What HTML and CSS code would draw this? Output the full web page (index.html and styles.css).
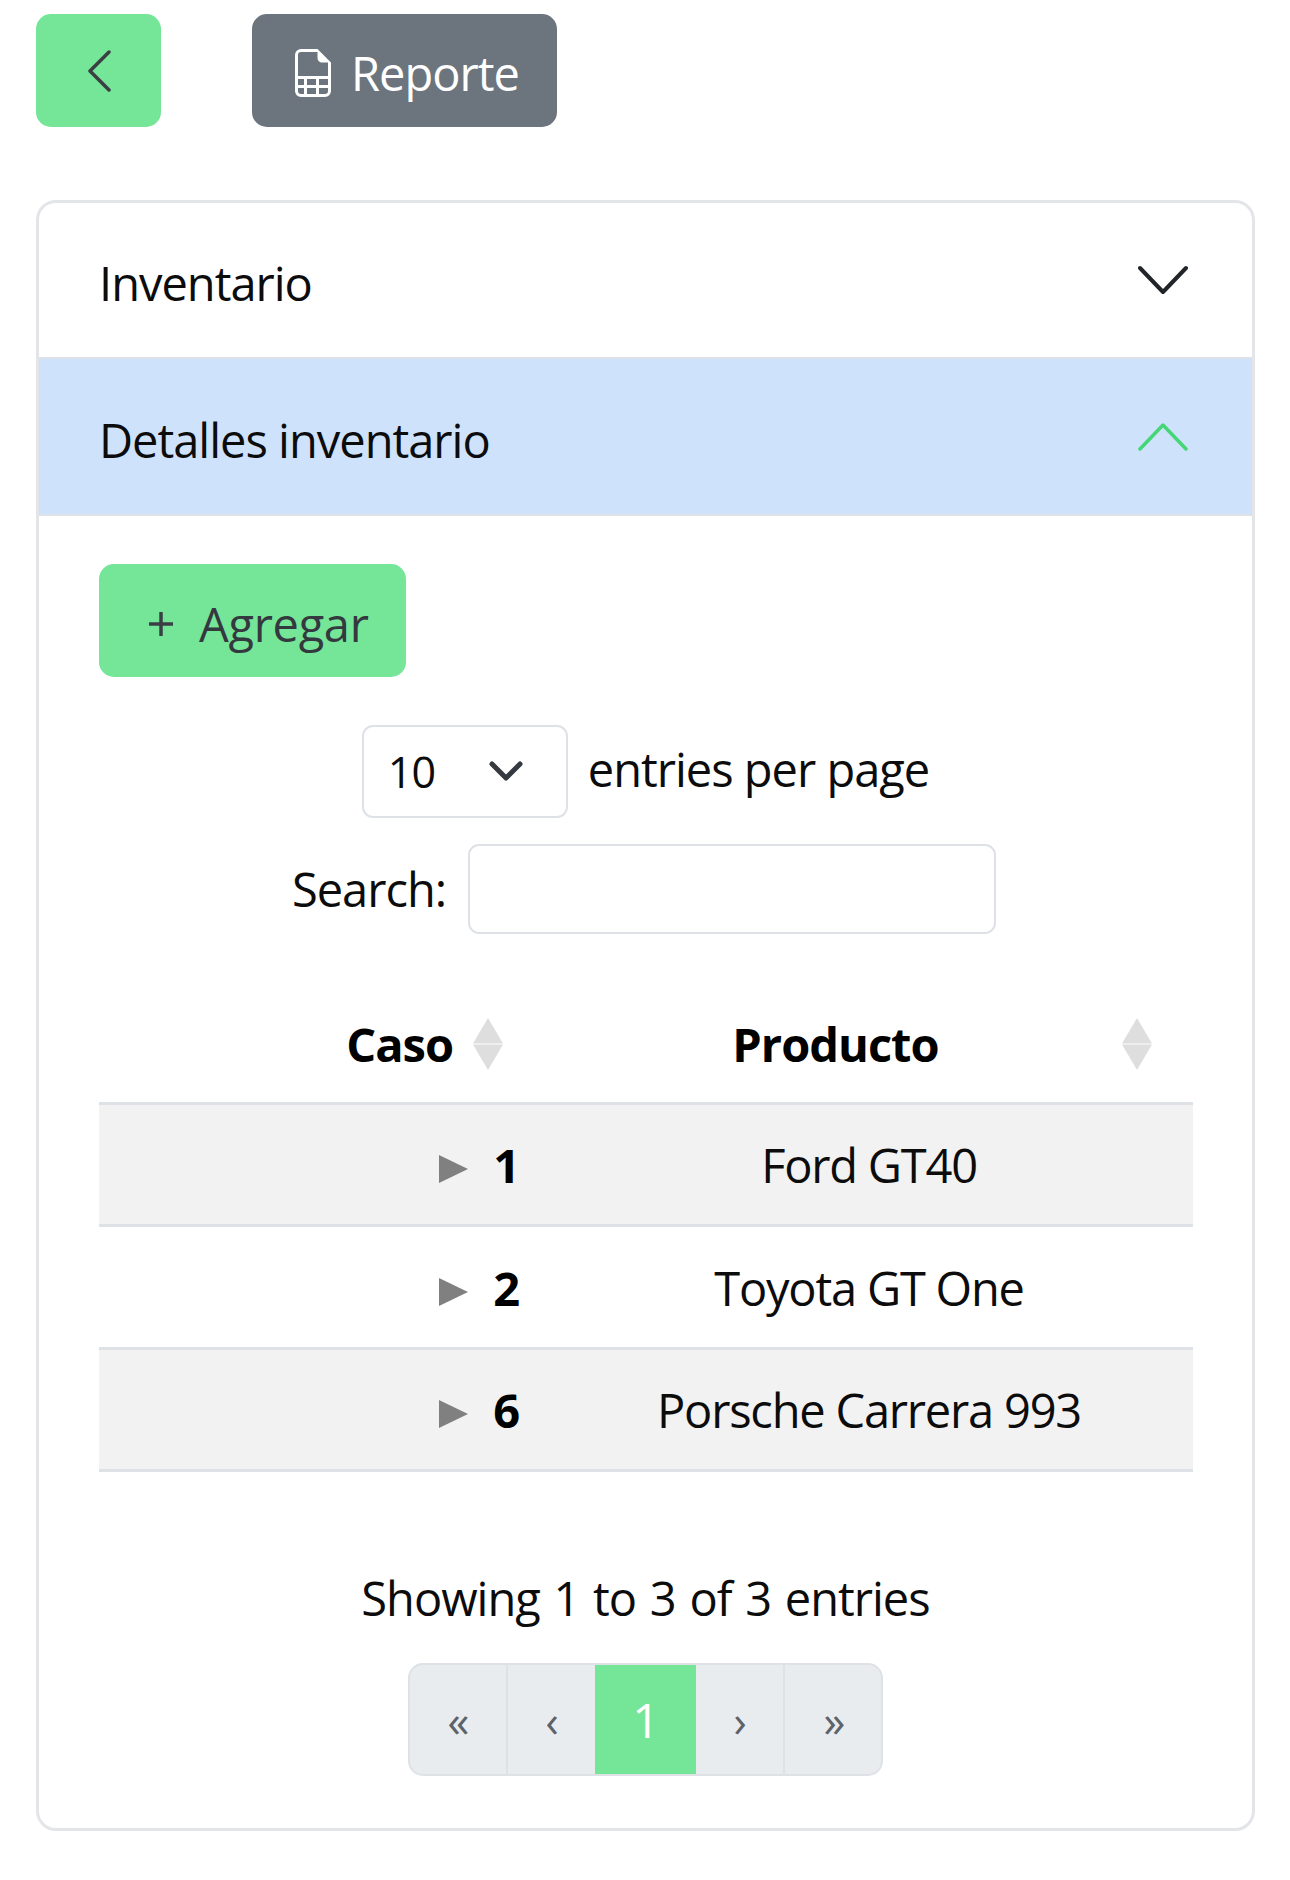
FILE: index.html
```html
<!DOCTYPE html>
<html>
  <head>
    <title>Detalles inventario</title>
    <link rel="stylesheet" href="styles.css">
  </head>
  <body>
    <div class="toolbar">
      <button class="btn btn-back" type="button">
        <svg width="24" height="42" viewBox="0 0 24 42"><polyline points="22,2 3,21 22,40" class="line dark"/></svg>
      </button>
      <button class="btn btn-report" type="button">
        <svg width="48" height="48" viewBox="0 0 16 16" fill="currentColor"><path d="M14 14V4.5L9.5 0H4a2 2 0 0 0-2 2v12a2 2 0 0 0 2 2h8a2 2 0 0 0 2-2zM9.5 3A1.5 1.5 0 0 0 11 4.5h2V9H3V2a1 1 0 0 1 1-1h5.5v2zM3 12v-2h2v2H3zm0 1h2v2H4a1 1 0 0 1-1-1v-1zm3 2v-2h3v2H6zm4 0v-2h3v1a1 1 0 0 1-1 1h-2zm3-3h-3v-2h3v2zm-7 0v-2h3v2H6z"/></svg>
        Reporte
      </button>
    </div>

    <div class="accordion">
      <div class="acc-header first-header">
        <span>Inventario</span>
        <svg width="50" height="30" viewBox="0 0 50 30"><polyline points="2,3 25,27 48,3" class="line black"/></svg>
      </div>
      <div class="acc-header open">
        <span>Detalles inventario</span>
        <svg width="50" height="30" viewBox="0 0 50 30"><polyline points="2,27 25,3 48,27" class="line green"/></svg>
      </div>
      <div class="acc-body">
        <button class="btn btn-add" type="button">
          <svg width="24" height="24" viewBox="0 0 24 24"><path d="M12 0V24M0 12H24" class="line dark"/></svg>
          Agregar
        </button>

        <div class="length-row">
          <div class="select-box">
            <select><option>10</option><option>25</option><option>50</option></select>
            <svg width="34" height="20" viewBox="0 0 34 20"><polyline points="3,3 17,17 31,3" class="line heavy"/></svg>
          </div>
          <label>entries per page</label>
        </div>
        <div class="search-row">
          <label>Search:</label>
          <input type="search">
        </div>

        <table class="grid">
          <thead>
            <tr>
              <th class="col-case">Caso
                <svg class="sort" width="30" height="52" viewBox="0 0 30 52"><path d="M15 0L30 25.5H0Z"/><path d="M15 52L30 26.5H0Z"/></svg>
              </th>
              <th class="col-product">Producto
                <svg class="sort" width="30" height="52" viewBox="0 0 30 52"><path d="M15 0L30 25.5H0Z"/><path d="M15 52L30 26.5H0Z"/></svg>
              </th>
            </tr>
          </thead>
          <tbody>
            <tr class="striped">
              <td class="cell-case"><span class="arrow"></span><b>1</b></td>
              <td class="cell-product">Ford GT40</td>
            </tr>
            <tr>
              <td class="cell-case"><span class="arrow"></span><b>2</b></td>
              <td class="cell-product">Toyota GT One</td>
            </tr>
            <tr class="striped">
              <td class="cell-case"><span class="arrow"></span><b>6</b></td>
              <td class="cell-product">Porsche Carrera 993</td>
            </tr>
          </tbody>
        </table>

        <div class="info">Showing 1 to 3 of 3 entries</div>
        <div class="pager">
          <a class="page first">«</a>
          <a class="page prev">‹</a>
          <a class="page active">1</a>
          <a class="page next">›</a>
          <a class="page last">»</a>
        </div>
      </div>
    </div>
  </body>
</html>
```

FILE: styles.css
```css
* {
  box-sizing: border-box;
}
body {
  margin: 0;
  padding: 14px 35px 0 36px;
  font-family: "Open Sans", "Noto Sans", sans-serif;
  font-size: 47px;
  letter-spacing: -1px;
  color: #0c0c0c;
  background: #fff;
}
button,
select,
input {
  font: inherit;
  letter-spacing: inherit;
}
.line {
  fill: none;
  stroke-width: 3.5;
  stroke-linecap: round;
  stroke-linejoin: round;
}
.dark {
  stroke: #3a3f44;
}
.black {
  stroke: #212529;
  stroke-width: 4;
}
.green {
  stroke: #45d676;
}
.heavy {
  stroke: #343a40;
  stroke-width: 5;
}
.toolbar {
  display: flex;
  gap: 91px;
  margin-bottom: 73px;
}
.btn {
  display: flex;
  align-items: center;
  height: 113px;
  border: 0;
  border-radius: 15px;
  padding: 0;
}
.btn-back {
  width: 125px;
  justify-content: center;
  background: #75e598;
}
.btn-report {
  width: 305px;
  padding: 4px 0 0 37px;
  gap: 14px;
  background: #6c757d;
  color: #fff;
}
.accordion {
  border: 3px solid #e3e5e8;
  border-radius: 20px;
  overflow: hidden;
  height: 1631px;
}
.acc-header {
  display: flex;
  align-items: center;
  justify-content: space-between;
  height: 157px;
  padding: 0 64px 0 60px;
  border-bottom: 2px solid #dee2e6;
}
.acc-header span {
  padding-top: 6px;
}
.first-header {
  height: 156px;
}
.open {
  background: #cfe2fc;
}
.acc-body {
  padding: 48px 60px 0;
}
.btn-add {
  width: 307px;
  height: 113px;
  padding: 6px 0 0 50px;
  gap: 26px;
  background: #75e598;
  color: #33393f;
  letter-spacing: -0.3px;
}
.length-row {
  display: flex;
  justify-content: center;
  align-items: center;
  gap: 20px;
  margin-top: 48px;
}
.length-row label {
  padding-bottom: 5px;
}
.select-box {
  position: relative;
  width: 206px;
  height: 93px;
}
.select-box select {
  width: 100%;
  height: 100%;
  appearance: none;
  background: #fff;
  border: 2px solid #dee2e6;
  border-radius: 11px;
  padding: 0 0 0 24px;
  color: #0c0c0c;
  font-size: 43px;
}
.select-box svg {
  position: absolute;
  top: 36px;
  left: 127px;
}
.search-row {
  display: flex;
  justify-content: center;
  align-items: center;
  gap: 22px;
  margin-top: 26px;
  padding-right: 3px;
}
.search-row input {
  width: 528px;
  height: 90px;
  border: 2px solid #dee2e6;
  border-radius: 11px;
}
.grid {
  width: 1094px;
  margin-top: 48px;
  border-collapse: collapse;
  table-layout: fixed;
}
.grid th {
  position: relative;
  height: 121px;
  padding-top: 5px;
  font-weight: 700;
  color: #000;
  border-bottom: 3px solid #dee2e6;
}
.col-case {
  width: 446px;
  text-align: right;
  padding-right: 92px;
}
.col-product {
  text-align: center;
  padding-right: 68px;
}
.sort {
  position: absolute;
  top: 36px;
  right: 42px;
  fill: #dedede;
}
.col-product .sort {
  right: 41px;
}
.grid td {
  height: 122.5px;
  border-bottom: 3px solid #dee2e6;
  padding-top: 3px;
}
.striped {
  background: #f2f2f2;
}
.cell-case {
  text-align: right;
  padding-right: 26px;
  color: #000;
}
.cell-case b {
  display: inline-block;
}
.arrow {
  display: inline-block;
  width: 0;
  height: 0;
  margin-right: 25px;
  border-left: 29px solid #808080;
  border-top: 14px solid transparent;
  border-bottom: 14px solid transparent;
}
.cell-product {
  text-align: center;
  letter-spacing: -1.2px;
}
.info {
  margin-top: 94px;
  text-align: center;
  word-spacing: 2.5px;
}
.pager {
  display: flex;
  width: 475px;
  height: 113px;
  margin: 33px auto 0;
  border: 2px solid #dee2e6;
  border-radius: 15px;
  overflow: hidden;
  background: #e9ecef;
  color: #5c636a;
  font-size: 44px;
}
.page {
  display: flex;
  align-items: center;
  justify-content: center;
  flex: none;
}
.first {
  width: 98px;
  border-right: 2px solid #dee2e6;
}
.prev {
  width: 87px;
}
.active {
  width: 101px;
  margin-top: -2px;
  margin-bottom: -2px;
  background: #75e598;
  color: #fff;
  font-size: 48px;
}
.next {
  width: 89px;
  border-right: 2px solid #dee2e6;
}
.last {
  width: 98px;
}
```
